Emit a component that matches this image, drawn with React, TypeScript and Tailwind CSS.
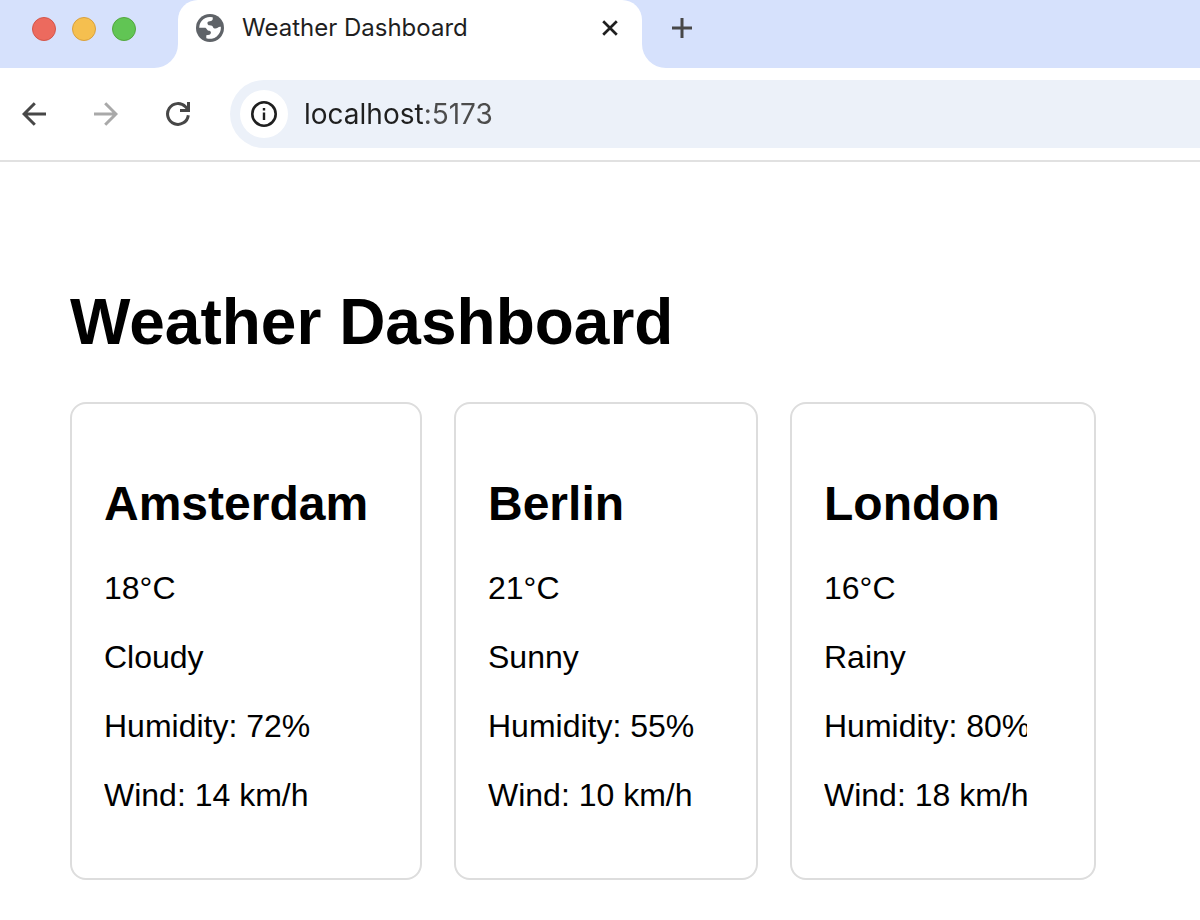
type City = {
	name: string;
	temperature: number;
	condition: string;
	humidity: number;
	wind: number;
};

const cities: City[] = [
	{ name: "Amsterdam", temperature: 18, condition: "Cloudy", humidity: 72, wind: 14 },
	{ name: "Berlin", temperature: 21, condition: "Sunny", humidity: 55, wind: 10 },
	{ name: "London", temperature: 16, condition: "Rainy", humidity: 80, wind: 18 },
];

const GlobeIcon = () => (
	<svg className="h-7 w-7 shrink-0" viewBox="0 0 28 28" aria-hidden="true">
		<circle cx="14" cy="14" r="14" fill="#5f6368" />
		<path
			d="M3.2 13.8A10.8 10.8 0 0 1 16.6 3.3C17.3 5.5 16 7.3 13.8 7.3C12 7.3 11.3 8.3 11.5 9.5C11.6 10.7 12.4 11.3 13.5 11.3C15.5 11.3 16.8 12 17.2 13.5C17.8 15 20.5 14.8 21.7 13.8C22.5 13 23.5 12.5 24.8 12.7A10.9 10.9 0 0 1 10.3 24.2V21.3C12.5 21.3 14.8 20.6 14.9 18.8C15 17.3 14 16.8 12.6 16.8C11 16.7 10.8 13.8 8.8 13.8Z"
			fill="#fff"
		/>
	</svg>
);

const TabStrip = () => (
	<div className="flex h-[68px] bg-white">
		<div className="flex w-[178px] shrink-0 items-start gap-4 rounded-br-3xl bg-[#d6e1fc] pt-[17px] pl-8">
			<button type="button" aria-label="Close window" className="h-6 w-6 rounded-full border border-[#d35549] bg-[#ec6a5e]" />
			<button type="button" aria-label="Minimize window" className="h-6 w-6 rounded-full border border-[#d9a03c] bg-[#f5bf4f]" />
			<button type="button" aria-label="Zoom window" className="h-6 w-6 rounded-full border border-[#53a73d] bg-[#61c554]" />
		</div>
		{/* upper half stays blue so the tab's round corners show */}
		<div className="w-[464px] shrink-0 bg-linear-to-b from-[#d6e1fc] from-50% to-white to-50%">
			<div className="flex h-full items-start rounded-t-[20px] bg-white pt-3 pr-5 pl-[18px]">
				<div className="flex h-8 flex-1 items-center gap-[18px]">
					<GlobeIcon />
					<span className="font-['Inter','Liberation_Sans',sans-serif] text-2xl text-[#1f1f1f]">
						Weather Dashboard
					</span>
				</div>
				<button type="button" aria-label="Close tab" className="flex h-8 w-6 items-center justify-center text-[#1f1f1f]">
					<svg className="h-4 w-4" viewBox="0 0 16 16" fill="none" stroke="currentColor" strokeWidth="2.7">
						<path d="M1.2 1.2l13.6 13.6M14.8 1.2L1.2 14.8" />
					</svg>
				</button>
			</div>
		</div>
		<div className="flex flex-1 items-start rounded-bl-3xl bg-[#d6e1fc] pt-3 pl-7">
			<button type="button" aria-label="New tab" className="flex h-8 w-6 items-center justify-center text-[#474747]">
				<svg className="h-5 w-5" viewBox="0 0 20 20" fill="none" stroke="currentColor" strokeWidth="3">
					<path d="M10 0v20M0 10h20" />
				</svg>
			</button>
		</div>
	</div>
);

const Toolbar = () => (
	<div className="flex items-center border-b-2 border-[#e1e1e1] bg-white py-3 pl-[22px]">
		<div className="flex items-center gap-12">
			<button type="button" aria-label="Back" className="text-[#474747]">
				<svg className="h-6 w-6" viewBox="0 0 24 24" fill="none" stroke="currentColor" strokeWidth="3">
					<path d="M24 12H2.5M12.8 1.2L2 12l10.8 10.8" />
				</svg>
			</button>
			<button type="button" aria-label="Forward" className="text-[#a9a9a9]">
				<svg className="h-6 w-6" viewBox="0 0 24 24" fill="none" stroke="currentColor" strokeWidth="3">
					<path d="M0 12h21.5M11.2 1.2L22 12 11.2 22.8" />
				</svg>
			</button>
			<button type="button" aria-label="Reload" className="text-[#474747]">
				<svg className="h-6 w-6" viewBox="0 0 24 24" fill="none" stroke="currentColor" strokeWidth="3">
					<path d="M22.3 13.2A10.4 10.4 0 1 1 19.5 4.800L22 7.5" />
					<path d="M22.5 0v8.5H14" />
				</svg>
			</button>
		</div>
		<div className="ml-10 flex h-[68px] flex-1 items-center gap-4 rounded-l-full bg-[#ecf1f9] pl-[10px]">
			<button
				type="button"
				aria-label="View site information"
				className="flex h-12 w-12 shrink-0 items-center justify-center rounded-full bg-white text-[#1f1f1f]"
			>
				<svg className="h-[26px] w-[26px]" viewBox="0 0 26 26" fill="none" stroke="currentColor">
					<circle cx="13" cy="13" r="11.7" strokeWidth="2.6" />
					<path d="M13 11.5v7.5M13 7v2.6" strokeWidth="2.4" />
				</svg>
			</button>
			{/* host is darker than the port */}
			<input
				type="text"
				aria-label="Address"
				defaultValue="localhost:5173"
				spellCheck={false}
				className="w-full min-w-0 bg-[linear-gradient(to_right,#1f1f1f_120px,#4c4c4c_120px)] bg-clip-text font-['Inter','Liberation_Sans',sans-serif] text-[28px] leading-10 text-transparent outline-none"
			/>
		</div>
	</div>
);

const WeatherCard = ({ city }: { city: City }) => (
	<article className="group rounded-2xl border-2 border-[#dddddd] px-8 pt-[72px] pb-16">
		<h2 className="mb-[38px] text-5xl leading-[56px] font-bold">{city.name}</h2>
		<div className="flex flex-col gap-8 overflow-hidden text-[32px] leading-[37px] whitespace-nowrap group-last:max-w-[203px]">
			<p>{city.temperature}°C</p>
			<p>{city.condition}</p>
			<p>Humidity: {city.humidity}%</p>
			<p>Wind: {city.wind} km/h</p>
		</div>
	</article>
);

export default function App() {
	return (
		<div className="min-h-screen bg-white font-['Liberation_Sans',Arial,sans-serif] text-black">
			<header>
				<TabStrip />
				<Toolbar />
			</header>
			<main className="pt-[124px] pr-[104px] pb-10 pl-[70px]">
				<h1 className="mb-[43px] text-[64px] leading-[73px] font-bold">Weather Dashboard</h1>
				<section className="grid grid-cols-[352fr_304fr_306fr] gap-8">
					{cities.map((city) => (
						<WeatherCard key={city.name} city={city} />
					))}
				</section>
			</main>
		</div>
	);
}
